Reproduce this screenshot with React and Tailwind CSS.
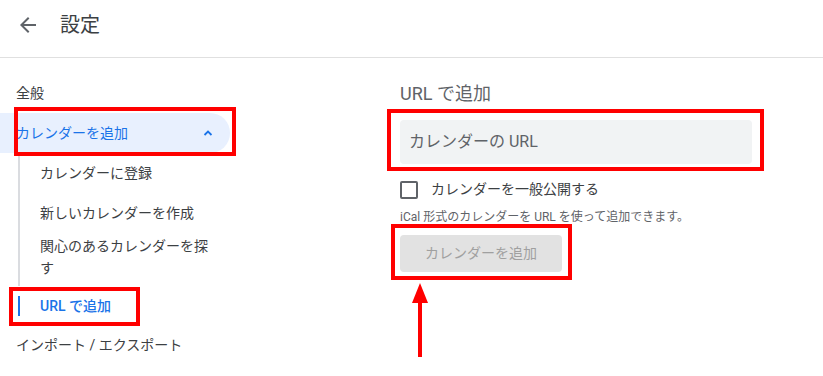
import React from 'react';

function BackArrow() {
  return (
    <svg width="24" height="24" viewBox="0 0 24 24" className="text-[#5f6368]">
      <path d="M20 11H7.83l5.59-5.59L12 4l-8 8 8 8 1.41-1.41L7.83 13H20v-2z" fill="currentColor" />
    </svg>
  );
}

function ChevronUp() {
  return (
    <svg width="12" height="12" viewBox="0 0 12 12" className="text-[#1a73e8]">
      <path d="M2.5 8 6 4.5 9.5 8" fill="none" stroke="currentColor" strokeWidth="1.8" />
    </svg>
  );
}

function RedBox({ className }) {
  return <div className={`absolute border-[4px] border-[#ff0000] pointer-events-none ${className}`} />;
}

export default function App() {
  return (
    <div className="relative w-[823px] h-[376px] overflow-hidden bg-white font-['Roboto','Noto_Sans_CJK_JP',sans-serif] text-[#3c4043]">
      <header className="h-[58px] border-b border-[#e0e0e0] flex items-center pl-[16px] pb-[8px]">
        <BackArrow />
        <h1 className="ml-[20px] text-[20px] leading-[26px]">設定</h1>
      </header>

      <div className="flex">
        <nav className="w-[400px] pt-[15px] text-[14px]">
          <div className="h-[40px] flex items-center pl-[16px]">全般</div>
          <div className="w-[230px] h-[40px] flex items-center justify-between pl-[16px] pr-[16px] bg-[#e8f0fe] rounded-r-full text-[#1a73e8]">
            <span>カレンダーを追加</span>
            <ChevronUp />
          </div>
          <div className="ml-[18px] w-[212px]">
            <div className="border-l-2 border-[#dadce0]">
              <div className="h-[40px] flex items-center pl-[20px]">カレンダーに登録</div>
              <div className="h-[40px] flex items-center pl-[20px]">新しいカレンダーを作成</div>
              <div className="pl-[20px] pr-[20px] pt-[2px] pb-[7px] leading-[22px]">関心のあるカレンダーを探す</div>
            </div>
            <div className="h-[40px] flex items-center">
              <span className="w-[2px] h-[20px] bg-[#1a73e8]" />
              <span className="pl-[20px] text-[#1a73e8] font-medium">URL で追加</span>
            </div>
          </div>
          <div className="h-[38px] flex items-center pl-[16px]">インポート / エクスポート</div>
        </nav>

        <main className="pt-[24px]">
          <h2 className="text-[18px] leading-[24px] text-[#5f6368]">URL で追加</h2>
          <div className="mt-[14px] w-[352px] h-[44px] rounded-[4px] bg-[#f1f3f4] flex items-center px-[9px] text-[16px] text-[#5f6368]">
            カレンダーの URL
          </div>
          <label className="mt-[15px] flex items-center gap-[13px] text-[14px]">
            <span className="w-[18px] h-[18px] border-2 border-[#5f6368] rounded-[2px]" />
            <span>カレンダーを一般公開する</span>
          </label>
          <p className="mt-[8px] text-[12px] text-[#5f6368]">iCal 形式のカレンダーを URL を使って追加できます。</p>
          <button className="mt-[9px] w-[162px] h-[37px] rounded-[4px] bg-[#e2e2e2] text-[14px] text-[#a0a0a0]">
            カレンダーを追加
          </button>
        </main>
      </div>

      <RedBox className="left-[14px] top-[107px] w-[222px] h-[49px]" />
      <RedBox className="left-[9px] top-[287px] w-[131px] h-[39px]" />
      <RedBox className="left-[387px] top-[109px] w-[377px] h-[62px]" />
      <RedBox className="left-[391px] top-[224px] w-[181px] h-[56px]" />

      <svg className="absolute left-[410px] top-[282px]" width="20" height="76" viewBox="0 0 20 76">
        <path d="M10 1 L18 21 L2 21 Z" fill="#ff0000" />
        <rect x="8" y="18" width="4" height="57" fill="#ff0000" />
      </svg>
    </div>
  );
}
